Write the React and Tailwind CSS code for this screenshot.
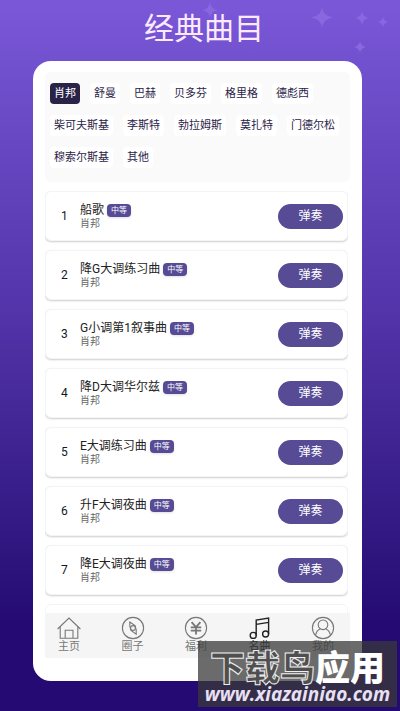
import React, { useState } from "react";

const composers = [
	["肖邦", "舒曼", "巴赫", "贝多芬", "格里格", "德彪西"],
	["柴可夫斯基", "李斯特", "勃拉姆斯", "莫扎特", "门德尔松"],
	["穆索尔斯基", "其他"],
];

const songs = [
	"船歌",
	"降G大调练习曲",
	"G小调第1叙事曲",
	"降D大调华尔兹",
	"E大调练习曲",
	"升F大调夜曲",
	"降E大调夜曲",
];

const iconProps = {
	viewBox: "0 0 24 24",
	fill: "none",
	stroke: "currentColor",
	strokeWidth: 1.1,
	className: "h-6 w-6",
	"aria-hidden": true,
};

const HomeIcon = () => (
	<svg {...iconProps}>
		<path d="M.6 13 12 2l11.4 11M3.2 10.6v11.6h17.6V10.6M8.2 22v-7.8h7.8V22" />
	</svg>
);

const CompassIcon = () => (
	<svg {...iconProps}>
		<circle cx="12" cy="12" r="10.6" />
		<path d="M8.8 6 14 9.6l1.2 4.2v4.4L10 14.4 8.8 10Z" />
		<circle cx="12" cy="12" r="2.4" />
	</svg>
);

const YuanIcon = () => (
	<svg {...iconProps}>
		<circle cx="12" cy="12" r="10.6" />
		<path
			strokeWidth="1.8"
			d="m7.6 6.2 4.4 5 4.4-5M6.8 11.4h10.4M6.8 14.6h10.4M12 11v7.4"
		/>
	</svg>
);

const MusicIcon = () => (
	<svg {...iconProps} strokeWidth="1.4">
		<path d="M8.2 19.4V4l12.4-2v16M8.2 8.4l12.4-2" />
		<circle cx="5.2" cy="19.4" r="3" />
		<circle cx="17.6" cy="18" r="3" />
	</svg>
);

const UserIcon = () => (
	<svg {...iconProps}>
		<circle cx="12" cy="12" r="10.6" />
		<circle cx="12" cy="8.8" r="4.8" />
		<path d="M4.6 19c.6-3 2.2-5 4.8-6.2M19.4 19c-.6-3-2.2-5-4.8-6.2" />
	</svg>
);

const tabs = [
	{ label: "主页", icon: HomeIcon },
	{ label: "圈子", icon: CompassIcon },
	{ label: "福利", icon: YuanIcon },
	{ label: "名曲", icon: MusicIcon },
	{ label: "我的", icon: UserIcon },
];

function Stars() {
	return (
		<svg
			viewBox="0 0 200 60"
			className="absolute top-0 right-0 w-1/2"
			fill="#8867e0"
			aria-hidden
		>
			<path d="M122 7q1 9 11 10.500-10 1.500-11 10.500-1-9-11-10.500 10-1.500 11-10.500Z" />
			<path d="M162 11q1 6 7 7-6 1-7 7-1-6-7-7 6-1 7-7Z" />
			<path d="M183 17q1 4 5 5-4 1-5 5-1-4-5-5 4-1 5-5Z" />
			<path d="M160 41q1 5 6 6-5 1-6 6-1-5-6-6 5-1 6-6Z" />
			<path d="M10 2q1 7 8 8-7 1-8 8-1-7-8-8 7-1 8-8Z" />
		</svg>
	);
}

function SongRow({ index, title }) {
	return (
		<li className="flex h-[50px] shrink-0 items-center rounded-md border border-gray-100 bg-white pr-1 shadow-[0_1px_2px_rgba(0,0,0,0.2)]">
			<span className="w-[34px] pl-[15px] text-xs text-gray-900">
				{index}
			</span>
			<div className="min-w-0 flex-1">
				<div className="flex items-center gap-[3px]">
					<h2 className="text-xs leading-4 text-[#222222]">{title}</h2>
					<span className="rounded bg-[#564b94] px-1 text-[8px] leading-[13px] text-white shadow-sm">
						中等
					</span>
				</div>
				<p className="text-[10px] leading-3 text-[#666666]">肖邦</p>
			</div>
			<button
				type="button"
				className="h-[25px] w-[65px] rounded-full bg-[#564b94] text-xs text-white"
			>
				弹奏
			</button>
		</li>
	);
}

export default function App() {
	const [composer, setComposer] = useState("肖邦");

	return (
		<div className="relative min-h-screen overflow-hidden bg-linear-to-b from-[#7a58d8] via-[#5333a8] via-45% to-[#240a72] to-88% pb-[30px] font-['Roboto','Noto_Sans_CJK_SC',sans-serif]">
			<Stars />
			<h1 className="relative pt-[9px] pl-2 text-center text-[30px] leading-[39px] text-[#fbeaff]">
				经典曲目
			</h1>

			<main className="mt-[13px] mr-[38px] ml-[33px] rounded-[18px] bg-white px-3 pt-[11px] pb-[23px]">
				{/* Filtres par compositeur */}
				<div className="flex h-[110px] flex-col gap-[11px] rounded-md bg-[#fafafa] px-[5px] pt-[11px]">
					{composers.map((row) => (
						<div key={row[0]} className="flex gap-[10px]">
							{row.map((name) => (
								<button
									key={name}
									type="button"
									onClick={() => setComposer(name)}
									className={`h-[21px] shrink-0 rounded px-1 text-[11px] leading-[22px] ${
										name === composer
											? "bg-[#2a2348] text-white"
											: "bg-white text-[#2a2348]"
									}`}
								>
									{name}
								</button>
							))}
						</div>
					))}
				</div>

				{/* Liste des morceaux */}
				<ul className="mt-[9px] mr-[2px] flex h-[422px] flex-col gap-[9px] overflow-hidden">
					{songs.map((title, i) => (
						<SongRow key={title} index={i + 1} title={title} />
					))}
					<li className="h-[50px] shrink-0 rounded-md border border-gray-100" />
				</ul>

				{/* Barre de navigation */}
				<nav className="flex h-[45px] justify-between bg-[#f5f5f5] pr-[15px] pl-3">
					{tabs.map(({ label, icon: Icon }) => (
						<a
							key={label}
							href="#"
							className={`flex flex-col items-center pt-[3px] text-[11px] leading-[14px] ${
								label === "名曲" ? "text-[#222222]" : "text-[#777777]"
							}`}
						>
							<Icon />
							{label}
						</a>
					))}
				</nav>
			</main>

			<div className="absolute right-[3px] bottom-1 flex h-[66px] w-[199px] flex-col items-center bg-[#3a3a3a]/75 pt-[14px] text-white">
				<p className="text-[35px] leading-[30px] font-black whitespace-nowrap">
					<span className="text-[#4f4f4f] [-webkit-text-stroke:1px_#eeeeee]">
						下载鸟
					</span>
					应用
				</p>
				<p className="font-['Open_Sans',sans-serif] text-[19px] leading-[18px] font-bold text-[#e8e0f4] italic">
					www.xiazainiao.com
				</p>
			</div>
		</div>
	);
}
